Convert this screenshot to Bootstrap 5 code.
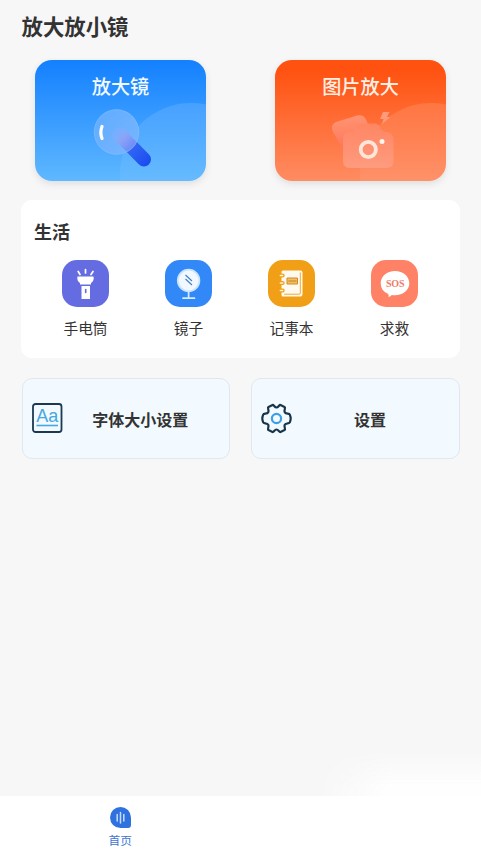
<!DOCTYPE html>
<html lang="zh-CN">
<head>
<meta charset="utf-8">
<meta name="viewport" content="width=device-width, initial-scale=1">
<title>放大放小镜</title>
<link href="https://cdn.jsdelivr.net/npm/bootstrap@5.3.0/dist/css/bootstrap.min.css" rel="stylesheet">
<style>
body{background:#f7f7f7;color:#333;font-family:"Noto Sans CJK SC",sans-serif;height:855px;overflow:hidden}
.app-title{font-size:21.4px;line-height:32px;font-weight:700;padding:10px 21.5px 0}
.hero-row{padding:17.5px 35px 0 35px}
.hero{width:171px;height:121px;border-radius:17px;box-shadow:0 3px 7px rgba(60,60,60,.12)}
.hero-blue{background:linear-gradient(#1380ff,#5fb8ff)}
.hero-orange{background:linear-gradient(#ff5210 8%,#ff8c62)}
.hero-name{font-size:19.2px;line-height:28px;padding-top:12px;font-weight:500;color:#f2faff}
.hero-orange .hero-name{color:#fff0e5}
.life{margin:19.5px 21px 0;height:157.5px;border-radius:11px;padding:18px 13px 0}
.life-title{font-size:18px;line-height:27px;font-weight:700}
.life-grid{padding-top:15px;margin-right:1px}
.life-name{font-size:14.7px;line-height:22px;margin-top:9.5px}
.tools{padding:20.5px 21px 0 21.5px;gap:21px}
.tool{height:81px;background:#f2faff;border:1.5px solid #dfe8f0;border-radius:10px;padding-left:9px}
.tool-name{font-size:16px;font-weight:700;padding-right:11px}
.tabs{height:59px}
.tab-home{padding-top:11px}
.tab-name{font-size:11.7px;line-height:17px;color:#3c75d2;margin-top:3px}
.glow{width:165px;height:48px;right:0;bottom:59px;background:linear-gradient(rgba(255,255,255,0),#fefefe 85%);-webkit-mask-image:linear-gradient(90deg,transparent,#000 45%);mask-image:linear-gradient(90deg,transparent,#000 45%)}
svg{display:block}
</style>
</head>
<body class="d-flex flex-column position-relative">
<h1 class="app-title m-0">放大放小镜</h1>

<div class="hero-row d-flex justify-content-between">
  <div class="hero hero-blue position-relative text-center">
    <svg class="position-absolute top-0 start-0" width="171" height="121" viewBox="0 0 171 121">
      <defs>
        <clipPath id="round"><rect width="171" height="121" rx="17"/></clipPath>
        <linearGradient id="sheen" x1="0" y1="0" x2="0" y2="1"><stop offset="0" stop-color="#fff" stop-opacity=".12"/><stop offset=".6" stop-color="#fff" stop-opacity=".04"/></linearGradient>
        <linearGradient id="handle" gradientUnits="userSpaceOnUse" x1="82" y1="74" x2="112" y2="104"><stop offset="0" stop-color="#4e79f6"/><stop offset=".6" stop-color="#2c60f3"/><stop offset="1" stop-color="#1c4df0"/></linearGradient>
        <linearGradient id="lens" x1="0" y1="0" x2="1" y2="1"><stop offset="0" stop-color="#5eacff"/><stop offset="1" stop-color="#7ab5ff"/></linearGradient>
        <linearGradient id="inner" gradientUnits="userSpaceOnUse" x1="78" y1="70" x2="100" y2="92"><stop offset="0" stop-color="#92adff" stop-opacity="0"/><stop offset=".45" stop-color="#8aa2f6"/><stop offset="1" stop-color="#5f84f8"/></linearGradient>
        <clipPath id="lensclip"><circle cx="81.500" cy="72" r="22.700"/></clipPath>
      </defs>
      <circle cx="156" cy="114" r="71" fill="url(#sheen)" clip-path="url(#round)"/>
      <path d="M87 77 109 99.500" stroke="url(#handle)" stroke-width="14" stroke-linecap="round"/>
      <circle cx="81.500" cy="72" r="22.700" fill="url(#lens)"/>
      <path d="M84 74 109 99.500" stroke="url(#inner)" stroke-width="14" stroke-linecap="round" clip-path="url(#lensclip)"/>
      <circle cx="81.500" cy="72" r="22.200" fill="none" stroke="#8cc5ff" stroke-opacity=".35"/>
      <path d="M67 66.500q-2.300 6 0 12" fill="none" stroke="#fff" stroke-width="3.200" stroke-linecap="round"/>
    </svg>
    <div class="hero-name position-relative">放大镜</div>
  </div>
  <div class="hero hero-orange position-relative text-center">
    <svg class="position-absolute top-0 start-0" width="171" height="121" viewBox="0 0 171 121">
      <defs>
        <linearGradient id="photo" x1=".4" y1="0" x2=".5" y2="1"><stop offset="0" stop-color="#ff9472"/><stop offset=".5" stop-color="#ff8264"/><stop offset="1" stop-color="#ff6a55"/></linearGradient>
        <linearGradient id="cam" x1="0" y1="0" x2="0" y2="1"><stop offset="0" stop-color="#ff8664"/><stop offset="1" stop-color="#ff9c80"/></linearGradient>
      </defs>
      <circle cx="156" cy="114" r="71" fill="url(#sheen)" clip-path="url(#round)"/>
      <path d="M61 62 82 55.500q7-1.500 9.500 5L100 83 74 96q-3 0-5-5L57.500 71q-2-6.500 3.500-9z" fill="url(#photo)"/>
      <path d="M75 72h1q3 0 4.500-3l1.500-2.500q2-3 6-3h11q4 0 6 3l1.500 2.500q1.500 3 4.500 3 7.500 1 7.500 7v22q0 7-7 7H75q-7 0-7-7V79q0-7 7-7z" fill="url(#cam)" fill-opacity=".95"/>
      <circle cx="93.300" cy="89.500" r="7.600" fill="none" stroke="#ffe6db" stroke-width="3.800"/>
      <circle cx="107" cy="81.500" r="2.500" fill="#fff5ef"/>
      <path d="M108 52h6.500l-2.500 5h3.500L107 64l1.500-5H105z" fill="#ff9b78"/>
    </svg>
    <div class="hero-name position-relative">图片放大</div>
  </div>
</div>

<section class="life bg-white">
  <h2 class="life-title m-0">生活</h2>
  <div class="life-grid row g-0 text-center">
    <div class="col-3 d-flex flex-column align-items-center">
      <svg width="47" height="47" viewBox="0 0 47 47"><rect width="47" height="47" rx="15" fill="#656be0"/><path d="M15.500 16.500h16q1 4-2.500 6.500v1.500H18V23q-3.500-2.500-2.500-6.500zM19.500 26h8.500v13h-8.500z" fill="#fff"/><path d="m16.200 11.500 1.800 3M23.500 9.500V13M31 11.500l-2 3" stroke="#fff" stroke-width="1.700" stroke-linecap="round"/><path d="M23.700 29.500v3" stroke="#656be0" stroke-width="1.600" stroke-linecap="round"/></svg>
      <div class="life-name">手电筒</div>
    </div>
    <div class="col-3 d-flex flex-column align-items-center">
      <svg width="47" height="47" viewBox="0 0 47 47"><rect width="47" height="47" rx="15" fill="#3288f7"/><circle cx="23.600" cy="20.500" r="10.800" fill="#f1f8ff" stroke="#c9e4ff" stroke-width="1.800"/><path d="M23.600 32v6M18 38.200h11.500" stroke="#d5ebff" stroke-width="1.700" stroke-linecap="round"/><path d="m20.500 15 6.500 6m-6.500-2 6.500 6" stroke="#3f7fc4" stroke-width="1.100"/></svg>
      <div class="life-name">镜子</div>
    </div>
    <div class="col-3 d-flex flex-column align-items-center">
      <svg width="47" height="47" viewBox="0 0 47 47"><rect width="47" height="47" rx="15" fill="#f09f17"/><path d="M15 10.500h17.500q2 0 2 2V34q0 2.500-2 2.500H15q-1.500 0-1.500-1.500V12q0-1.500 1.500-1.500z" fill="#fffaf0"/><path d="M32.300 12.500v20.700q0 1-1 1H16" fill="none" stroke="#f09f17" stroke-width=".9"/><path d="M13 15.500h1.700M13 23h1.700M13 30.500h1.700" stroke="#f09f17" stroke-width="4" stroke-linecap="round"/><path d="M12.300 15.500h2.400M12.300 23h2.400M12.300 30.500h2.400" stroke="#fff1d2" stroke-width="1.500" stroke-linecap="round"/><path d="M19 18h10.500v6H19z" fill="#f5bd61" stroke="#cf8c24"/><path d="M20.500 21h8" stroke="#bd8430"/></svg>
      <div class="life-name">记事本</div>
    </div>
    <div class="col-3 d-flex flex-column align-items-center">
      <svg width="47" height="47" viewBox="0 0 47 47"><rect width="47" height="47" rx="15" fill="#ff8266"/><path d="M24 11c8 0 14.300 5.300 14.300 12.200S32 35.200 24 35.200q-1.800 0-3.200-.3-1 1.500-3.300 2 .5-1.500-.3-3-7.500-3.200-7.500-10.700C9.700 16.300 16 11 24 11z" fill="#fff"/><text x="24.200" y="27" text-anchor="middle" font-family="Liberation Serif, serif" font-weight="700" font-size="10" textLength="18.500" fill="#ee7d66">SOS</text></svg>
      <div class="life-name">求救</div>
    </div>
  </div>
</section>

<div class="tools d-flex">
  <div class="tool d-flex align-items-center flex-fill w-50">
    <svg class="flex-shrink-0" width="31" height="31" viewBox="0 0 31 31"><rect x="1" y="1" width="28.500" height="28" rx="2.500" fill="none" stroke="#1b3a52" stroke-width="1.800"/><text x="15.200" y="19.300" text-anchor="middle" font-family="Liberation Sans, sans-serif" font-size="18" fill="#47a7df">Aa</text><path d="M4.500 22.500h21.500" stroke="#47a7df" stroke-width="1.600"/></svg>
    <div class="tool-name flex-grow-1 text-center">字体大小设置</div>
  </div>
  <div class="tool d-flex align-items-center flex-fill w-50">
    <svg class="flex-shrink-0" width="31" height="31" viewBox="0 0 31 31"><path d="M11.500 2c1.300-.5 2 2.500 4 2.500s2.700-3 4-2.500l4 1.900c1.600 1-.8 3.100.2 5.200 1.300 2.300 4.500.9 5.100 2.500.5 1.300.9 2.600.9 3.900s-.4 2.600-.9 3.900c-.6 1.600-3.800.2-5.100 2.500-1 2.100 1.400 4.200-.2 5.200l-4 1.900c-1.300.5-2-2.500-4-2.500s-2.700 3-4 2.500l-4-1.900c-1.600-1 .8-3.100-.2-5.200-1.300-2.300-4.500-.9-5.100-2.500-.5-1.300-.9-2.600-.9-3.900s.4-2.600.9-3.900c.6-1.600 3.800-.2 5.100-2.500 1-2.100-1.400-4.200.2-5.200z" fill="none" stroke="#17364a" stroke-width="2.200" stroke-linejoin="round"/><circle cx="15.500" cy="15.500" r="4.600" fill="none" stroke="#3d9fe3" stroke-width="2.200"/></svg>
    <div class="tool-name flex-grow-1 text-center">设置</div>
  </div>
</div>

<div class="glow position-absolute"></div>
<nav class="tabs bg-white mt-auto row g-0 text-center">
  <div class="tab-home col-6 d-flex flex-column align-items-center">
    <svg width="21" height="21" viewBox="0 0 21 21"><path d="M10.500 0A10.500 10.500 0 0 1 21 10.500V18q0 3-3 3h-7.500a10.500 10.500 0 0 1 0-21z" fill="#2e71df"/><path d="M7.200 7.500v6.500M10.500 5.500v10.500M13.800 7.500v6.500" stroke="#c6dcff" stroke-width="1.500" stroke-linecap="round"/></svg>
    <div class="tab-name">首页</div>
  </div>
</nav>
<script src="https://cdn.jsdelivr.net/npm/bootstrap@5.3.0/dist/js/bootstrap.bundle.min.js"></script>
</body>
</html>
